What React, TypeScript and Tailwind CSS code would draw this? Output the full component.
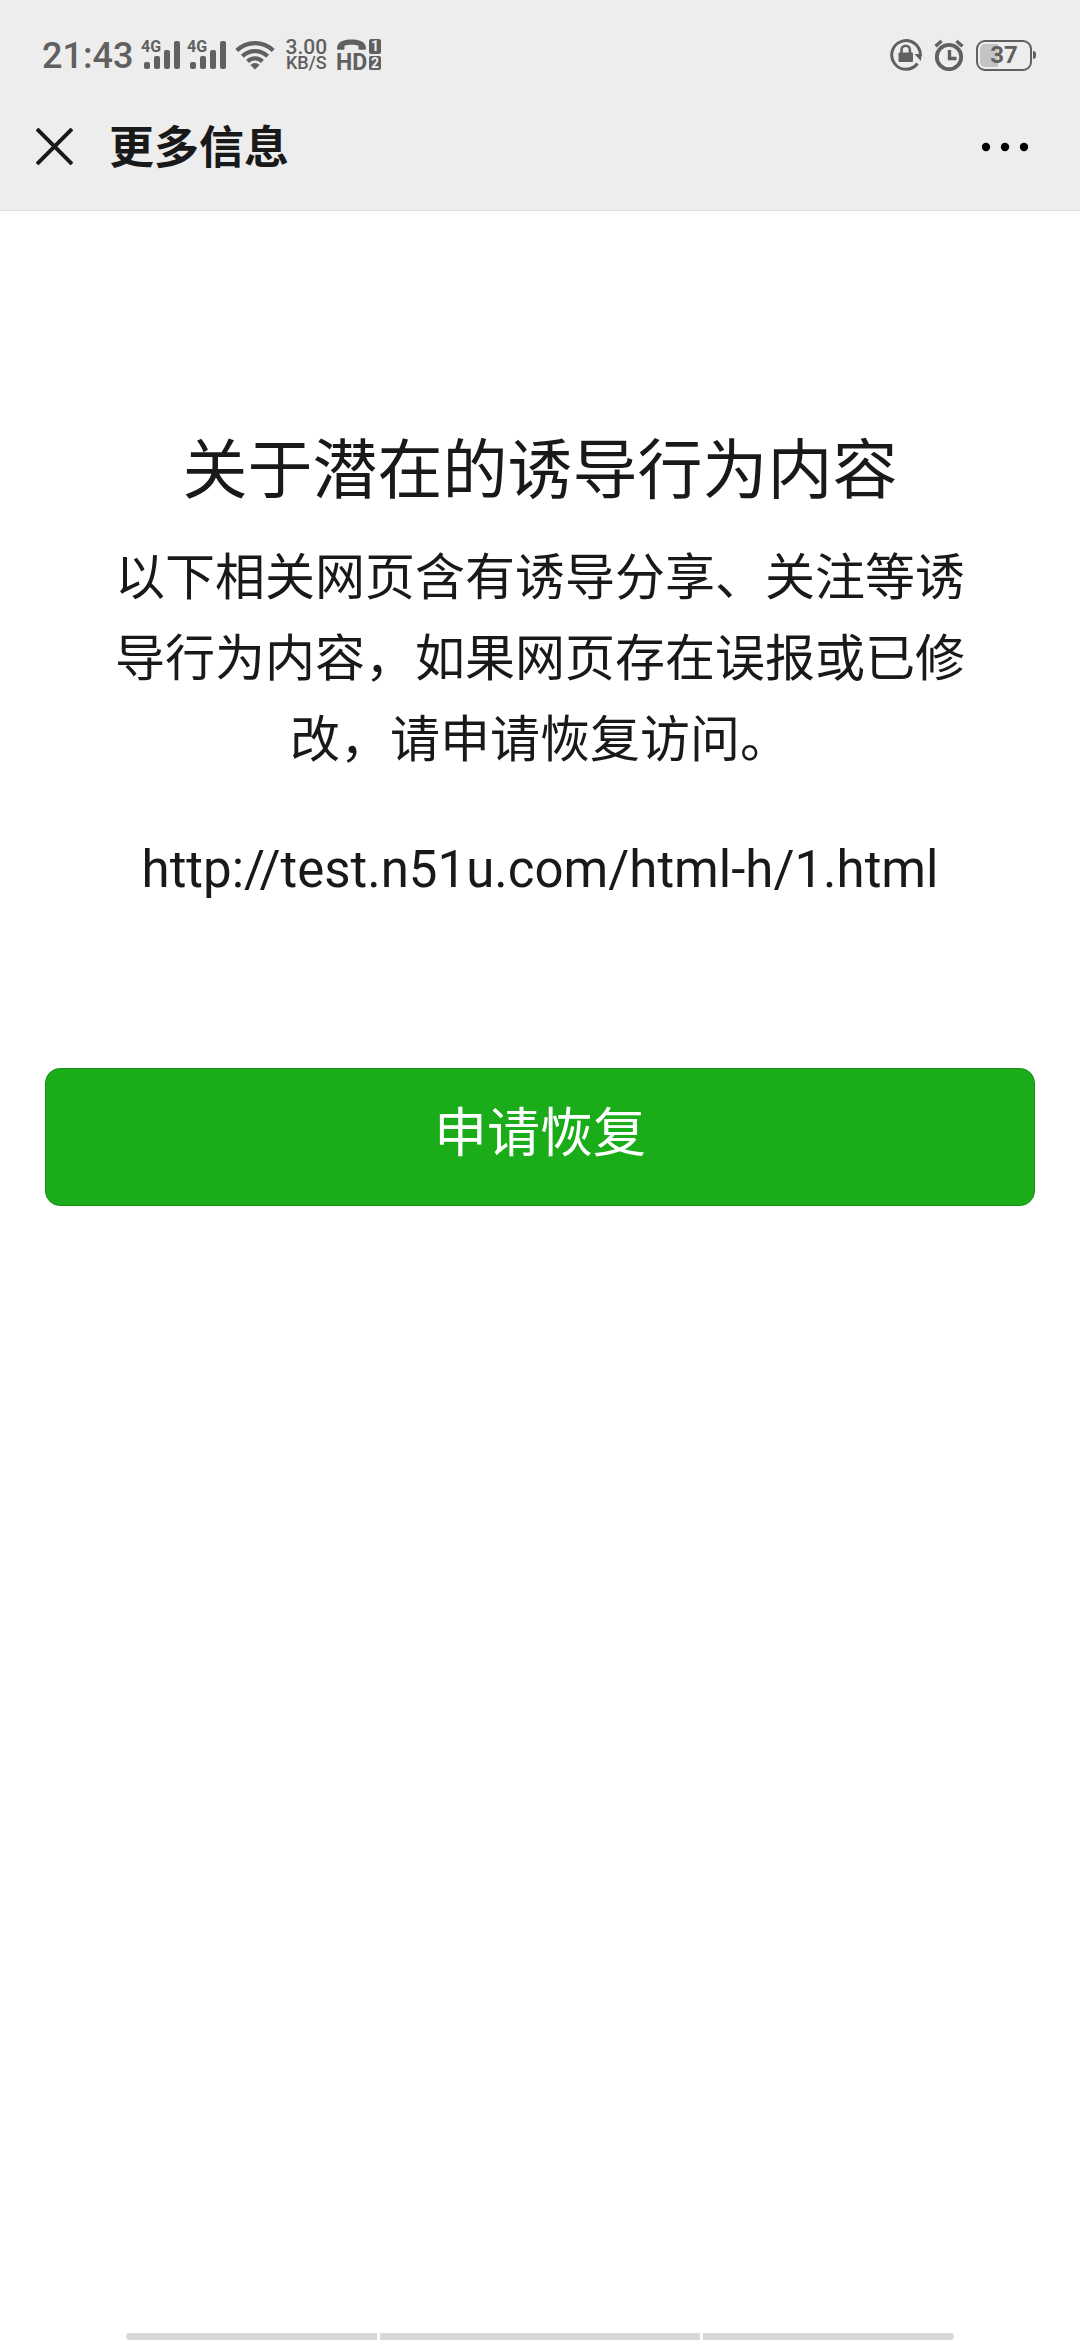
import * as React from "react";

function SignalIcon() {
  return (
    <svg width="40" height="32" viewBox="0 0 40 32" fill="currentColor" className="overflow-visible" aria-label="4G">
      <text x="0" y="13" fontSize="16" fontWeight="700" fontFamily="Roboto, sans-serif">
        4G
      </text>
      <rect x="3" y="23" width="6" height="7" rx="2" />
      <rect x="13" y="17" width="6" height="13" rx="2" />
      <rect x="23" y="11" width="6" height="19" rx="2" />
      <rect x="33" y="2" width="6" height="28" rx="2" />
    </svg>
  );
}

function WifiIcon() {
  return (
    <svg width="40" height="32" viewBox="0 0 40 32" fill="none" stroke="currentColor" strokeWidth="4.2" aria-hidden="true">
      <path d="M1.8 11.6a26 26 0 0 1 36.4 0" />
      <path d="M7.4 17.2a18 18 0 0 1 25.2 0" />
      <path d="M12.6 22.4a10.6 10.6 0 0 1 14.8 0" />
      <path d="M20 30.500l-4.600-4.600a6.500 6.500 0 0 1 9.200 0z" fill="currentColor" stroke="none" />
    </svg>
  );
}

function HdCallIcon() {
  return (
    <svg
      width="44"
      height="32"
      viewBox="0 0 44 32"
      fill="currentColor"
      fontFamily="Roboto, sans-serif"
      className="overflow-visible"
      aria-label="HD"
    >
      <path d="M0 9.500C0 3 6 .4 14.500 .4S29 3 29 9.500c0 .8-.6 1.300-1.400 1.300h-4.800c-.8 0-1.300-.5-1.300-1.300V6.700c-4-1.400-10-1.400-14 0v2.800c0 .8-.5 1.300-1.300 1.300H1.400C.6 10.800 0 10.300 0 9.500z" />
      <text x="-1" y="31" fontSize="23" fontWeight="700">
        HD
      </text>
      <rect x="32" y="0" width="12" height="15" rx="2" />
      <rect x="32" y="17" width="12" height="14" rx="2" />
      <g fill="#ededed" fontSize="14" fontWeight="700" textAnchor="middle">
        <text x="38" y="12">1</text>
        <text x="38" y="29">2</text>
      </g>
    </svg>
  );
}

function RotationLockIcon() {
  return (
    <svg width="32" height="32" viewBox="0 0 32 32" fill="none" stroke="currentColor" strokeWidth="3" aria-hidden="true">
      <path d="M27.500 24.500A14.300 14.300 0 1 1 30.300 17" />
      <path d="M24.500 15h7.300l-1 7z" fill="currentColor" stroke="none" />
      <path d="M11.500 15v-4a4.200 4.200 0 0 1 8.400 0v4" strokeWidth="2.600" />
      <rect x="8.500" y="13.500" width="14.500" height="9.500" rx="1" fill="currentColor" stroke="none" />
    </svg>
  );
}

function AlarmIcon() {
  return (
    <svg width="30" height="32" viewBox="0 0 30 32" fill="none" stroke="currentColor" aria-hidden="true">
      <circle cx="15" cy="18" r="12.200" strokeWidth="3.800" />
      <path d="M15.500 11v8.500h7" strokeWidth="3.400" />
      <path d="M1.500 7.200L7.600 2M22.400 2l6.100 5.200" strokeWidth="3.400" />
    </svg>
  );
}

function Battery({ level }: { level: number }) {
  return (
    <div className="flex items-center gap-px">
      <div className="relative h-[31px] w-14 rounded-[9px] border-2 border-[#606060] p-0.5">
        <div className="h-full rounded-l-[5px] bg-[#c4c4c4]" style={{ width: `${level}%` }} />
        <span className="absolute inset-0 flex items-center justify-center text-[24px] leading-none font-bold">
          {level}
        </span>
      </div>
      <div className="h-2 w-[3px] rounded-r-sm bg-[#606060]" />
    </div>
  );
}

function StatusBar() {
  return (
    <div className="flex h-[110px] items-center justify-between pr-11 pl-[42px] text-[#606060]">
      <div className="flex items-center">
        <span className="pt-0.5 text-[36px] leading-none font-medium">21:43</span>
        <div className="ml-2 flex gap-1.5">
          <SignalIcon />
          <SignalIcon />
        </div>
        <div className="ml-2">
          <WifiIcon />
        </div>
        <div className="ml-2.5 flex w-[42px] flex-col text-center font-medium">
          <span className="text-[21px] leading-4">3.00</span>
          <span className="text-[18px] leading-4">KB/S</span>
        </div>
        <div className="ml-2.5">
          <HdCallIcon />
        </div>
      </div>
      <div className="flex items-center gap-3">
        <RotationLockIcon />
        <AlarmIcon />
        <Battery level={37} />
      </div>
    </div>
  );
}

function NavBar() {
  return (
    <div className="flex h-[100px] items-start justify-between px-9">
      <div className="flex h-[72px] items-center gap-9">
        <button type="button" aria-label="关闭">
          <svg width="37" height="37" viewBox="0 0 37 37" stroke="#191919" strokeWidth="4" aria-hidden="true">
            <path d="M1 1l35 35M36 1L1 36" />
          </svg>
        </button>
        <h1 className="pt-1.5 text-[45px] leading-[66px] font-bold">更多信息</h1>
      </div>
      <button type="button" aria-label="更多" className="flex h-[74px] items-center px-[15px]">
        <svg width="48" height="10" viewBox="0 0 48 10" fill="#000" aria-hidden="true">
          <circle cx="5" cy="5" r="4.200" />
          <circle cx="24" cy="5" r="4.200" />
          <circle cx="43" cy="5" r="4.200" />
        </svg>
      </button>
    </div>
  );
}

export default function App() {
  return (
    <div className="flex min-h-screen flex-col bg-white font-[Roboto,'Noto_Sans_CJK_SC',sans-serif] text-[#191919]">
      <header className="border-b border-[#dedede] bg-[#ededed]">
        <StatusBar />
        <NavBar />
      </header>

      <main className="flex flex-1 flex-col px-[45px] pt-[208px]">
        <div className="px-[68px] text-center">
          <h2 className="text-[65px] leading-[104px]">关于潜在的诱导行为内容</h2>
          <p className="mt-[15px] text-[50px] leading-[81px]">
            以下相关网页含有诱导分享、关注等诱导行为内容，如果网页存在误报或已修改，请申请恢复访问。
          </p>
          <p className="mt-12 text-[51px] leading-[81px]">http://test.n51u.com/html-h/1.html</p>
        </div>
        <button
          type="button"
          className="mt-[158px] h-[138px] rounded-[15px] border border-[#178e17] bg-[#1aad19] pb-1 text-[53px] text-white"
        >
          申请恢复
        </button>
      </main>

      <footer className="flex justify-center gap-[3px]" aria-hidden="true">
        <div className="h-[7px] w-[251px] rounded-l-full bg-[#d8d8d8]" />
        <div className="h-[7px] w-80 bg-[#d8d8d8]" />
        <div className="h-[7px] w-[251px] rounded-r-full bg-[#d8d8d8]" />
      </footer>
    </div>
  );
}
